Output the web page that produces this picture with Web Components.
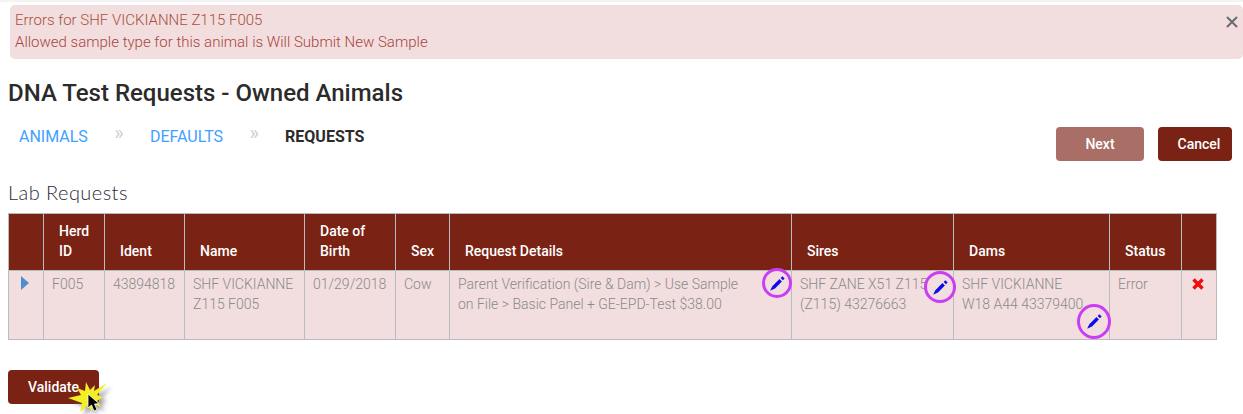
<!DOCTYPE html>
<html lang="en">
<head>
<meta charset="utf-8">
<title>DNA Test Requests</title>
<style>
  html, body { margin: 0; background: #fff; }
  body { font-family: Roboto, "Liberation Sans", sans-serif; width: 1243px; height: 414px; overflow: hidden; }
</style>
</head>
<body>
<request-page></request-page>

<script>
// ── alert banner ──
class ErrorAlert extends HTMLElement {
  constructor() {
    super();
    this.attachShadow({ mode: 'open' }).innerHTML = `
      <style>
        :host { display: block; margin-left: 10px; height: 54px; box-sizing: border-box; padding: 4px 5px 0;
          background: #f2dede; border-radius: 5px; color: #a94442; font-size: 15px; font-weight: 300;
          line-height: 22px; position: relative; }
        .title { color: #a8503c; }
        svg { position: absolute; right: 5px; top: 11px; }
      </style>
      <div class="title"><slot name="title"></slot></div>
      <div><slot></slot></div>
      <svg width="12" height="12" viewBox="0 0 12 12"><path d="M1 1l10 10M11 1L1 11" stroke="#666d72" stroke-width="2" fill="none"/></svg>`;
  }
}

// ── wizard steps ──
class WizardSteps extends HTMLElement {
  constructor() {
    super();
    this.attachShadow({ mode: 'open' }).innerHTML = `
      <style>
        :host { display: flex; align-items: center; height: 20px; font-size: 16px; color: #42a0ff; font-weight: 400; gap: 25px; padding-left: 11px; }
        span { white-space: nowrap; }
        .sep { color: #cfcfcf; font-size: 20px; position: relative; top: -3px; width: 12px; text-align: center; }
        .cur { color: #2b2b2b; font-weight: 700; }
      </style>
      <span>ANIMALS</span><span class="sep">»</span>
      <span>DEFAULTS</span><span class="sep">»</span>
      <span class="cur">REQUESTS</span>`;
  }
}

// ── buttons ──
class ActionButton extends HTMLElement {
  constructor() {
    super();
    this.attachShadow({ mode: 'open' }).innerHTML = `
      <style>
        :host { display: flex; align-items: center; justify-content: center; box-sizing: border-box; height: 34px;
          background: #7a2314; color: #fff; font-size: 14px; font-weight: 500; border-radius: 4px; }
        :host([disabled]) { background: #a96f66; }
      </style>
      <slot></slot>`;
  }
}

// ── purple ring + pencil, drawn over the table cells ──
class EditPin extends HTMLElement {
  constructor() {
    super();
    this.attachShadow({ mode: 'open' }).innerHTML = `
      <style>
        :host { position: absolute; display: flex; align-items: center; justify-content: center; box-sizing: border-box;
          border: 3px solid #cb3df4; border-radius: 50%; }
      </style>
      <svg width="17" height="17" viewBox="0 0 15 15">
        <path d="M4 11L10.3 4.7" stroke="#0b0bef" stroke-width="3" fill="none"/>
        <path d="M11.3 3.7L12.8 2.2" stroke="#0b0bef" stroke-width="2.8" fill="none"/>
        <path d="M3 9.8L5.2 12 1 14z" fill="#0b0bef"/>
      </svg>`;
  }
}

// ── lab requests table ──
class LabTable extends HTMLElement {
  constructor() {
    super();
    const cols = [35, 61, 80, 120, 91, 54, 342, 162, 156, 72, 35];
    this.attachShadow({ mode: 'open' }).innerHTML = `
      <style>
        :host { display: block; position: relative; width: 1208px; height: 127px; }
        table { border-collapse: collapse; table-layout: fixed; width: 1208px; font-size: 14px; }
        th, td { border: 1px solid #b9bcbc; padding: 0; box-sizing: border-box; }
        th { background: #7a2314; color: #fff; font-weight: 500; text-align: left; vertical-align: bottom;
          height: 57px; line-height: 20px; padding: 0 8px 9px 15px; }
        td { background: #f2dede; color: #8a8a8a; font-weight: 300; vertical-align: top; height: 69px;
          line-height: 20px; padding: 3px 8px 0 8px; }
        td.details { padding-right: 45px; }
        .arrow { width: 0; height: 0; border-left: 8px solid #4f8fd1; border-top: 7px solid transparent;
          border-bottom: 7px solid transparent; margin: 2px 0 0 4px; }
        svg { display: block; margin: 4px 0 0 2px; }
        .p1 { left: 754px; top: 55px; width: 30px; height: 30px; }
        .p2 { left: 916px; top: 58px; width: 32px; height: 32px; }
        .p3 { left: 1069px; top: 91px; width: 34px; height: 35px; }
      </style>
      <table>
        <colgroup>${cols.map(w => `<col style="width:${w}px">`).join('')}</colgroup>
        <tr>
          <th></th><th>Herd<br>ID</th><th>Ident</th><th>Name</th><th>Date of<br>Birth</th><th>Sex</th>
          <th>Request Details</th><th>Sires</th><th>Dams</th><th>Status</th><th></th>
        </tr>
        <tr>
          <td><div class="arrow"></div></td>
          <td>F005</td><td>43894818</td><td>SHF VICKIANNE Z115 F005</td><td>01/29/2018</td><td>Cow</td>
          <td class="details">Parent Verification (Sire &amp; Dam) &gt; Use Sample on File &gt; Basic Panel + GE-EPD-Test $38.00</td>
          <td>SHF ZANE X51 Z115 (Z115) 43276663</td><td>SHF VICKIANNE<br>W18 A44 43379400</td><td>Error</td>
          <td><svg width="12" height="12" viewBox="0 0 12 12"><path d="M1.5 1.5l9 9M10.5 1.5l-9 9" stroke="#f30a0a" stroke-width="3.4" fill="none"/></svg></td>
        </tr>
      </table>
      <edit-pin class="p1"></edit-pin><edit-pin class="p2"></edit-pin><edit-pin class="p3"></edit-pin>`;
  }
}

// ── yellow click burst and mouse pointer ──
class ClickBurst extends HTMLElement {
  constructor() {
    super();
    this.attachShadow({ mode: 'open' }).innerHTML = `
      <style>
        :host { position: absolute; display: block; width: 40px; height: 32px; }
        svg { display: block; overflow: visible; }
      </style>
      <svg width="40" height="32" viewBox="0 0 40 32">
        <defs><filter id="s" x="-30%" y="-30%" width="170%" height="170%"><feGaussianBlur stdDeviation="2"/></filter></defs>
        <path d="M18 0L22 8 27 3 26 9 39 1 29 13 35 15 29 19 33 25 25 22 24 30 20 23 12 30 14 21 0 16 13 13 9 6 17 9z" fill="#555" opacity=".55" filter="url(#s)" transform="translate(4 4)"/>
        <path d="M18 0L22 8 27 3 26 9 39 1 29 13 35 15 29 19 33 25 25 22 24 30 20 23 12 30 14 21 0 16 13 13 9 6 17 9z" fill="#f4ee24"/>
        <path d="M20 12v14l3.5-3 2.5 6 3-1.3-2.5-5.7 4.6-.3z" fill="#000" stroke="#fff" stroke-width=".8"/>
      </svg>`;
  }
}

// ── whole page ──
class RequestPage extends HTMLElement {
  constructor() {
    super();
    this.attachShadow({ mode: 'open' }).innerHTML = `
      <style>
        :host { display: block; position: relative; border-top: 2px solid #f4f4f4; padding-top: 3px; height: 409px; box-sizing: content-box; }
        h1 { margin: 19px 0 0 8px; font-size: 24px; line-height: 30px; font-weight: 500; color: #2b2b2b; }
        .bar { display: flex; justify-content: space-between; align-items: flex-start; height: 68px; margin-top: 3px; }
        .bar wizard-steps { margin: 15px 0 0 8px; }
        .buttons { display: flex; gap: 14px; margin: 16px 11px 0 0; }
        .next { width: 88px; } .cancel { width: 74px; padding-left: 8px; }
        h2 { margin: 2px 0 0 8px; font: 300 20px/22px Lato, Roboto, sans-serif; color: #2c2c3a; letter-spacing: .45px; }
        lab-table { margin: 10px 0 0 8px; }
        .foot { margin: 30px 0 0 8px; position: relative; width: 91px; }
        click-burst { left: 60px; top: 12px; }
      </style>
      <error-alert>
        <span slot="title">Errors for SHF VICKIANNE Z115 F005</span>
        Allowed sample type for this animal is Will Submit New Sample
      </error-alert>
      <h1>DNA Test Requests - Owned Animals</h1>
      <div class="bar">
        <wizard-steps></wizard-steps>
        <div class="buttons">
          <action-button class="next" disabled>Next</action-button>
          <action-button class="cancel">Cancel</action-button>
        </div>
      </div>
      <h2>Lab Requests</h2>
      <lab-table></lab-table>
      <div class="foot">
        <action-button>Validate</action-button>
        <click-burst></click-burst>
      </div>`;
  }
}

customElements.define('error-alert', ErrorAlert);
customElements.define('wizard-steps', WizardSteps);
customElements.define('action-button', ActionButton);
customElements.define('edit-pin', EditPin);
customElements.define('lab-table', LabTable);
customElements.define('click-burst', ClickBurst);
customElements.define('request-page', RequestPage);
</script>
</body>
</html>
